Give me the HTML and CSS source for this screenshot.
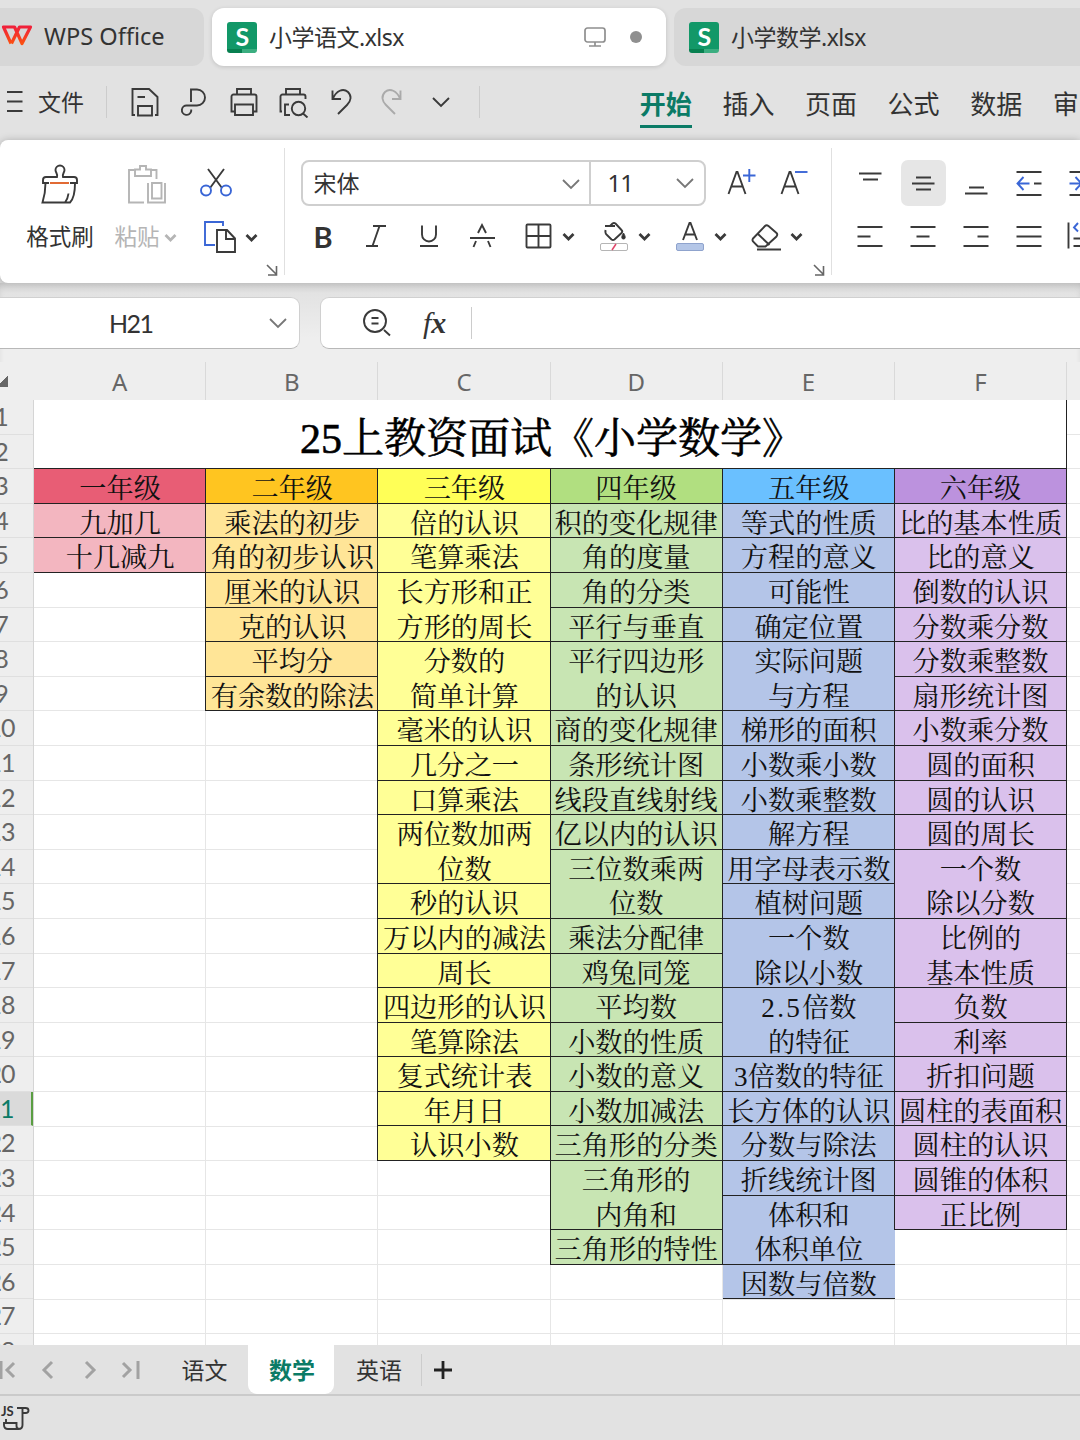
FILE: index.html
```html
<!DOCTYPE html>
<html lang="zh">
<head>
    <meta charset="UTF-8">
    <meta name="viewport" content="width=device-width, initial-scale=1.0">
    <title>WPS Office</title>
    <link rel="stylesheet" href="styles.css">
</head>
<body>
    <!-- 文档标签 -->
    <div class="tabbar">
        <div class="tab tab-home">
            <svg class="logo" width="32" height="26" viewBox="0 0 32 26">
                <defs>
                    <linearGradient id="wps" x1="0" y1="0" x2="0" y2="1">
                        <stop offset="0" stop-color="#f0203a"/>
                        <stop offset="1" stop-color="#fb5012"/>
                    </linearGradient>
                </defs>
                <path d="M10 20.500L2.500 4H13.500L21 20.500L29.500 4H18.500L10.500 20.500" fill="none" stroke="url(#wps)" stroke-width="3.2" stroke-linejoin="round"/>
            </svg>
            <span class="wps-name">WPS Office</span>
        </div>
        <div class="tab tab-active">
            <div class="file-icon">S</div>
            <span>小学语文.xlsx</span>
            <svg class="monitor" width="24" height="24" viewBox="0 0 24 24">
                <rect x="2" y="3" width="20" height="14" rx="2.5"/>
                <path d="M12 17v4M6 21h12"/>
            </svg>
            <span class="dot"></span>
        </div>
        <div class="tab tab-next">
            <div class="file-icon">S</div>
            <span>小学数学.xlsx</span>
        </div>
    </div>

    <!-- 菜单 -->
    <div class="menubar">
        <svg class="burger" width="18" height="24" viewBox="0 0 18 24"><path d="M1 2h15.500M1 11.500h15.500M1 21h15.500"/></svg>
        <span class="file-menu">文件</span>
        <span class="sep"></span>
        <div class="quick">
            <svg viewBox="0 0 32 32"><path d="M6 29H3.500V3H20l8.500 8v18H26M9 29.500V20h14v9.500zM8.500 11H16"/></svg>
            <svg viewBox="0 0 32 32"><path d="M13 16V3.500h6a8 8 0 0 1 0 16H9a4.700 4.700 0 1 0 4.200 5.500v-1.500"/></svg>
            <svg viewBox="0 0 32 32"><path d="M9 8.500V3h14v5.500M7 25.500H3.500v-15a2 2 0 0 1 2-2h21a2 2 0 0 1 2 2v15H25M7 18.500h18v10.500H7z"/></svg>
            <svg viewBox="0 0 32 32"><path d="M9 8.500V3h14v5.500M5 25.500H3.500v-15a2 2 0 0 1 2-2h21a2 2 0 0 1 2 2V13M12 18.500H8v10.500h5M26 27.500l4.500 4"/><circle cx="21.500" cy="22.500" r="6.700"/></svg>
            <svg viewBox="0 0 32 32"><path d="M6.500 4.500v8.500H15M7 12.500C10 5 17 1.500 22 6c4 4 3 9-1 13l-9 9"/></svg>
            <svg class="off" viewBox="0 0 32 32"><path d="M25.500 4.500v8.500H17M25 12.500C22 5 15 1.500 10 6c-4 4-3 9 1 13l9 9"/></svg>
            <svg viewBox="0 0 32 32"><path d="M8 12l8 8 8-8"/></svg>
        </div>
        <span class="sep"></span>
        <div class="menus">
            <span class="on">开始</span>
            <span>插入</span>
            <span>页面</span>
            <span>公式</span>
            <span>数据</span>
            <span>审阅</span>
        </div>
    </div>

    <!-- 功能区 -->
    <div class="ribbon">
        <div class="group clip">
            <div class="big">
                <svg width="40" height="42" viewBox="0 0 40 42">
                    <path d="M17 13c1-3-1.500-4.500-1.500-7a4.500 4.500 0 0 1 9 0c0 2.500-2.500 4-1.500 7H34a3 3 0 0 1 3 3v3H3v-3a3 3 0 0 1 3-3zM5.500 19c0 8-1 13-3 19.500H30c4-4 5-11 5-19.500M25 38.500c2-2.500 3-5 3.500-9"/>
                    <path d="M9 19h21" stroke="#fff" stroke-width="3"/>
                    <path d="M10 19h19" stroke="#e0622a"/>
                </svg>
                <span>格式刷</span>
            </div>
            <div class="big off">
                <svg width="40" height="42" viewBox="0 0 40 42"><path d="M18 38.500H3V6h5M25 6h5.500v9M9 5.500h5V2h6v3.500h5v6.500H9zM22 19v19.500h17V19M26 19h9.500v15.500H26z"/></svg>
                <span>粘贴<svg class="caret" viewBox="0 0 12 12"><path d="M2 4l4 4 4-4"/></svg></span>
            </div>
            <div class="small">
                <svg width="34" height="32" viewBox="0 0 34 32">
                    <path d="M9 2l14 19M25 2L11 21"/>
                    <g stroke="#3a66d6"><circle cx="7" cy="23.500" r="5"/><circle cx="27" cy="23.500" r="5"/></g>
                </svg>
                <span class="pair">
                    <svg width="34" height="34" viewBox="0 0 34 34">
                        <path d="M12 25H2V2h18v4" stroke="#3a66d6"/>
                        <path d="M14 10h10l8 8.500V32H14zM23 10v9h9"/>
                    </svg>
                    <svg class="caret" viewBox="0 0 12 12"><path d="M2 4l4 4 4-4"/></svg>
                </span>
            </div>
            <svg class="corner" viewBox="0 0 12 12"><path d="M1 1l9 9M10.500 2v9H2"/></svg>
        </div>

        <div class="group font">
            <div class="line">
                <div class="combo">
                    <div class="combo-name">宋体<svg width="20" height="12" viewBox="0 0 20 12"><path d="M2 2l8 8 8-8"/></svg></div>
                    <div class="combo-size">11<svg width="20" height="12" viewBox="0 0 20 12"><path d="M2 2l8 8 8-8"/></svg></div>
                </div>
                <svg class="sizer" width="53" height="32" viewBox="0 0 53 32"><path d="M10.500 27l8-22h1l8 22M13.500 19.500h11"/><path d="M25 8.500h12.500M31.300 2v13" stroke="#3a66d6"/></svg>
                <svg class="sizer" width="53" height="32" viewBox="0 0 53 32"><path d="M10.500 27l8-22h1l8 22M13.500 19.500h11"/><path d="M24 5h12.500" stroke="#3a66d6"/></svg>
            </div>
            <div class="line">
                <span class="cell bold">B</span>
                <span class="cell"><svg width="32" height="32" viewBox="0 0 32 32"><path d="M13 5h13M6 25h12M19.500 5l-7 20"/></svg></span>
                <span class="cell"><svg width="32" height="32" viewBox="0 0 32 32"><path d="M9 4.500v9a7 7 0 0 0 14 0v-9M7 25h18"/></svg></span>
                <span class="cell"><svg width="32" height="32" viewBox="0 0 32 32"><path d="M12 12l4-8 4 8M4 17h25M10 20l-2.500 6M22 20l2.500 6"/></svg></span>
                <span class="pair">
                    <svg width="32" height="32" viewBox="0 0 32 32"><rect x="4.500" y="3.500" width="24" height="23" rx="1"/><path d="M16.500 3.500v23M4.500 15h24"/></svg>
                    <svg class="caret" viewBox="0 0 12 12"><path d="M2 4l4 4 4-4"/></svg>
                </span>
                <span class="pair">
                    <svg width="32" height="32" viewBox="0 0 32 32">
                        <path d="M7 5h10M7.500 9c-.5 3 0 4 1.500 5l4.500 4.500q1.500 1 3 0l7-6.500q1.500-1.500 0-3l-6-6.500q-1.500-1-3 0L12 5"/>
                        <path d="M25.500 12c2.500 4 2 6 0 6s-2.500-2 0-6z" fill="#333" stroke-width="1"/>
                        <rect x="2.500" y="22.500" width="27" height="7" rx="1.500" stroke="#b5b5b5" stroke-width="1"/>
                        <path d="M14 29l4-6" stroke="#e0456a" stroke-width="1.500"/>
                    </svg>
                    <svg class="caret" viewBox="0 0 12 12"><path d="M2 4l4 4 4-4"/></svg>
                </span>
                <span class="pair">
                    <svg width="32" height="32" viewBox="0 0 32 32">
                        <path d="M9 19l6.500-17h1L23 19M11.500 13.500h9.500"/>
                        <rect x="2.500" y="22.500" width="27" height="7" rx="1.500" fill="#b4c6e7" stroke="#8fa3cd" stroke-width="1"/>
                    </svg>
                    <svg class="caret" viewBox="0 0 12 12"><path d="M2 4l4 4 4-4"/></svg>
                </span>
                <span class="pair">
                    <svg width="32" height="32" viewBox="0 0 32 32"><path d="M3 17.500L15 5q1.500-1.500 3.500 0l8 7q1.500 1.500 0 3.500L15.500 25.500H8l-5-5q-1-1.500 0-3zM8 13l11.500 11M7 28.500h24"/></svg>
                    <svg class="caret" viewBox="0 0 12 12"><path d="M2 4l4 4 4-4"/></svg>
                </span>
            </div>
            <svg class="corner" viewBox="0 0 12 12"><path d="M1 1l9 9M10.500 2v9H2"/></svg>
        </div>

        <div class="group align">
            <div class="line">
                <span class="cell"><svg width="32" height="32" viewBox="0 0 32 32"><path d="M5 6.500h22.500M9 12.500h15"/></svg></span>
                <span class="cell on"><svg width="32" height="32" viewBox="0 0 32 32"><path d="M9 10.500h15M5 16.500h22.500M9 22.500h15"/></svg></span>
                <span class="cell"><svg width="32" height="32" viewBox="0 0 32 32"><path d="M9 20.500h15M5 26.500h22.500"/></svg></span>
                <span class="cell"><svg width="32" height="32" viewBox="0 0 32 32"><path d="M3.500 5h25M3.500 28h25M21 16.500h7.500"/><path d="M10.500 10l-6 6.500 6 6.500M4.500 16.500h12" stroke="#3a66d6"/></svg></span>
                <span class="cell"><svg width="32" height="32" viewBox="0 0 32 32"><path d="M3.500 5h25M3.500 28h25"/><path d="M9.500 10l6 6.500-6 6.500M3.500 16.500h12" stroke="#3a66d6"/></svg></span>
            </div>
            <div class="line">
                <span class="cell"><svg width="32" height="32" viewBox="0 0 32 32"><path d="M3.500 6h25M3.500 15.500h13M3.500 25h25"/></svg></span>
                <span class="cell"><svg width="32" height="32" viewBox="0 0 32 32"><path d="M3.500 6h25M9.500 15.500h13M3.500 25h25"/></svg></span>
                <span class="cell"><svg width="32" height="32" viewBox="0 0 32 32"><path d="M3.500 6h25M17.500 15.500h11M3.500 25h25"/></svg></span>
                <span class="cell"><svg width="32" height="32" viewBox="0 0 32 32"><path d="M3.500 6h25M3.500 15.500h25M3.500 25h25"/></svg></span>
                <span class="cell"><svg width="32" height="32" viewBox="0 0 32 32"><path d="M2.500 1.500v26M7.500 17.500h20M7.500 25h20"/><path d="M12 2L8 6.500l4 4" stroke="#3a66d6"/></svg></span>
            </div>
        </div>
    </div>

    <!-- 编辑栏 -->
    <div class="formula">
        <div class="name-box"><span>H21</span><svg width="20" height="12" viewBox="0 0 20 12"><path d="M2 2l8 8 8-8"/></svg></div>
        <div class="fx-box">
            <svg width="32" height="32" viewBox="0 0 32 32"><circle cx="15" cy="14" r="11"/><path d="M11.500 11h7M11.500 16.500h7M24 23l6 5.500"/></svg>
            <span class="fx">f<b>x</b></span>
            <span class="sep"></span>
        </div>
    </div>

    <!-- 表格 -->
    <div class="heads">
        <span class="all"></span>
        <span>A</span><span>B</span><span>C</span><span>D</span><span>E</span><span>F</span>
    </div>
    <div class="sheet">
        <div class="nums">
            <span>1</span><span>2</span><span>3</span><span>4</span><span>5</span><span>6</span><span>7</span>
            <span>8</span><span>9</span><span>10</span><span>11</span><span>12</span><span>13</span><span>14</span>
            <span>15</span><span>16</span><span>17</span><span>18</span><span>19</span><span>20</span><span class="on">21</span>
            <span>22</span><span>23</span><span>24</span><span>25</span><span>26</span><span>27</span><span>28</span>
        </div>
        <div class="grid">
            <div class="title">25上教资面试《小学数学》</div>
            <div class="cols">
                <div class="col c1">
                    <div>一年级</div>
                    <div>九加几</div>
                    <div>十几减九</div>
                </div>
                <div class="col c2">
                    <div>二年级</div>
                    <div>乘法的初步</div>
                    <div>角的初步认识</div>
                    <div>厘米的认识</div>
                    <div>克的认识</div>
                    <div>平均分</div>
                    <div>有余数的除法</div>
                </div>
                <div class="col c3">
                    <div>三年级</div>
                    <div>倍的认识</div>
                    <div>笔算乘法</div>
                    <div class="two">长方形和正<br>方形的周长</div>
                    <div class="two">分数的<br>简单计算</div>
                    <div>毫米的认识</div>
                    <div>几分之一</div>
                    <div>口算乘法</div>
                    <div class="two">两位数加两<br>位数</div>
                    <div>秒的认识</div>
                    <div>万以内的减法</div>
                    <div>周长</div>
                    <div>四边形的认识</div>
                    <div>笔算除法</div>
                    <div>复式统计表</div>
                    <div>年月日</div>
                    <div>认识小数</div>
                </div>
                <div class="col c4">
                    <div>四年级</div>
                    <div>积的变化规律</div>
                    <div>角的度量</div>
                    <div>角的分类</div>
                    <div>平行与垂直</div>
                    <div class="two">平行四边形<br>的认识</div>
                    <div>商的变化规律</div>
                    <div>条形统计图</div>
                    <div>线段直线射线</div>
                    <div>亿以内的认识</div>
                    <div class="two">三位数乘两<br>位数</div>
                    <div>乘法分配律</div>
                    <div>鸡兔同笼</div>
                    <div>平均数</div>
                    <div>小数的性质</div>
                    <div>小数的意义</div>
                    <div>小数加减法</div>
                    <div>三角形的分类</div>
                    <div class="two">三角形的<br>内角和</div>
                    <div>三角形的特性</div>
                </div>
                <div class="col c5">
                    <div>五年级</div>
                    <div>等式的性质</div>
                    <div>方程的意义</div>
                    <div>可能性</div>
                    <div>确定位置</div>
                    <div class="two">实际问题<br>与方程</div>
                    <div>梯形的面积</div>
                    <div>小数乘小数</div>
                    <div>小数乘整数</div>
                    <div>解方程</div>
                    <div>用字母表示数</div>
                    <div>植树问题</div>
                    <div class="two">一个数<br>除以小数</div>
                    <div class="two"><span class="dec">2.5</span>倍数<br>的特征</div>
                    <div>3倍数的特征</div>
                    <div>长方体的认识</div>
                    <div>分数与除法</div>
                    <div>折线统计图</div>
                    <div class="two">体积和<br>体积单位</div>
                    <div>因数与倍数</div>
                </div>
                <div class="col c6">
                    <div>六年级</div>
                    <div>比的基本性质</div>
                    <div>比的意义</div>
                    <div>倒数的认识</div>
                    <div>分数乘分数</div>
                    <div>分数乘整数</div>
                    <div>扇形统计图</div>
                    <div>小数乘分数</div>
                    <div>圆的面积</div>
                    <div>圆的认识</div>
                    <div>圆的周长</div>
                    <div class="two">一个数<br>除以分数</div>
                    <div class="two">比例的<br>基本性质</div>
                    <div>负数</div>
                    <div>利率</div>
                    <div>折扣问题</div>
                    <div>圆柱的表面积</div>
                    <div>圆柱的认识</div>
                    <div>圆锥的体积</div>
                    <div>正比例</div>
                </div>
            </div>
        </div>
    </div>

    <!-- 工作表标签 -->
    <div class="sheet-tabs">
        <div class="nav">
            <svg viewBox="0 0 20 20"><path d="M3 1v18M16 3l-7 7 7 7"/></svg>
            <svg viewBox="0 0 20 20"><path d="M13 2l-8 8 8 8"/></svg>
            <svg viewBox="0 0 20 20"><path d="M6 2l8 8-8 8"/></svg>
            <svg viewBox="0 0 20 20"><path d="M2 3l7 7-7 7M17 1v18"/></svg>
        </div>
        <span class="st">语文</span>
        <span class="st on">数学</span>
        <span class="st">英语</span>
        <span class="sep"></span>
        <svg class="plus" width="20" height="20" viewBox="0 0 20 20"><path d="M10 1v18M1 10h18"/></svg>
    </div>
    <div class="status">
        <svg width="30" height="28" viewBox="0 0 30 28">
            <text x="1" y="12">JS</text>
            <path d="M17 4h8.500q3 0 3 2.500t-3 2.500H23M22.500 4v17q0 4-4 4H8q-4 0-4-4v-2h12.500v3q0 3 3 3M6 19v-4"/>
        </svg>
    </div>
</body>
</html>
```
FILE: styles.css
```css
* {
    box-sizing: border-box;
}

body {
    margin: 0;
    width: 1080px;
    height: 1440px;
    overflow: hidden;
    display: flex;
    flex-direction: column;
    background: #e2e2e2;
    color: #333;
    font-family: "Noto Sans", "Noto Sans CJK SC", sans-serif;
    font-size: 23px;
    line-height: 1;
    white-space: nowrap;
}

svg {
    display: block;
    flex: none;
    fill: none;
    stroke: #3a3a3a;
    stroke-width: 1.9;
}

.sep {
    width: 1px;
    height: 32px;
    background: #cccccc;
    flex: none;
}

/* 文档标签 */
.tabbar {
    height: 75px;
    flex: none;
    padding-top: 8px;
    display: flex;
    gap: 8px;
}

.tab {
    height: 58px;
    border-radius: 12px;
    background: #d7d7d7;
    display: flex;
    align-items: center;
    flex: none;
    padding-left: 15px;
    letter-spacing: -0.5px;
}

.tab-home {
    width: 204px;
    padding-left: 1px;
    border-radius: 0 12px 12px 0;
    gap: 11px;
    letter-spacing: 0;
    font-size: 23.6px;
}

.logo {
    margin-top: -3px;
}

.tab-active {
    width: 454px;
    background: #fff;
    box-shadow: 0 1px 4px rgba(0, 0, 0, 0.15);
}

.tab-next {
    width: 420px;
    border-radius: 12px 0 0 12px;
}

.file-icon {
    width: 30px;
    height: 31px;
    margin-right: 12px;
    border-radius: 3px;
    background: linear-gradient(90deg, #078050 50%, #3bae80 50%) bottom / 100% 4px no-repeat #129868;
    color: #fff;
    font: bold 25px/28px Lato, sans-serif;
    text-align: center;
}

.monitor {
    margin-left: auto;
    margin-right: 23px;
    stroke: #8f8f8f;
    stroke-width: 1.7;
}

.dot {
    width: 12px;
    height: 12px;
    border-radius: 50%;
    background: #8f8f8f;
    margin-right: 24px;
}

/* 菜单 */
.menubar {
    height: 65px;
    flex: none;
    display: flex;
    align-items: center;
    padding: 0 0 11px 6px;
}

.file-menu {
    margin: 0 22px 0 14px;
}

.quick {
    display: flex;
    margin: 0 22px;
}

.quick svg {
    width: 32px;
    height: 32px;
    margin-right: 17.3px;
}

.quick svg:last-child {
    margin-right: 0;
}

.quick .off {
    stroke: #aaa;
}

.menus {
    display: flex;
    gap: 30.6px;
    margin-left: 160px;
    font-size: 26px;
}

.menus span {
    padding: 14px 0 8px;
    border-bottom: 3px solid transparent;
}

.menus .on {
    color: #0b7b66;
    font-weight: bold;
    border-color: #0b7b66;
}

/* 功能区 */
.ribbon {
    height: 143px;
    flex: none;
    display: flex;
    padding-top: 8px;
    background: #fff;
    border-radius: 8px 0 0 8px;
    box-shadow: 0 1px 9px rgba(0, 0, 0, 0.28);
}

.group {
    position: relative;
    height: 127px;
    border-right: 1px solid #e0e0e0;
    flex: none;
}

.corner {
    position: absolute;
    right: 6px;
    bottom: -1px;
    width: 12px;
    height: 12px;
    stroke: #666;
    stroke-width: 1.6;
}

.caret {
    width: 15px;
    height: 15px;
    stroke-width: 2.2;
}

.clip {
    width: 285px;
    display: flex;
}

.big {
    width: 86px;
    padding-top: 16px;
    display: flex;
    flex-direction: column;
    align-items: center;
    gap: 20px;
    font-size: 22.5px;
}

.big:first-child {
    margin-left: 17px;
}

.big span {
    display: flex;
    align-items: center;
    gap: 3px;
}

.big.off {
    color: #b5b5b5;
}

.big.off svg {
    stroke: #b5b5b5;
}

.small {
    padding: 19px 0 0 10px;
    display: flex;
    flex-direction: column;
    gap: 21px;
}

.small .pair {
    width: 60px;
    margin-left: 4px;
}

.pair {
    width: 76px;
    display: flex;
    align-items: center;
    gap: 7px;
    flex: none;
}

.line {
    display: flex;
    align-items: center;
    height: 53px;
}

.line + .line {
    margin-top: 1px;
}

.cell {
    width: 53px;
    height: 46px;
    display: flex;
    align-items: center;
    justify-content: center;
    flex: none;
}

.font {
    width: 547px;
    padding-top: 8px;
    padding-left: 11.5px;
}

.font .line .pair:nth-child(5) {
    margin-left: 13px;
}

.bold {
    font: bold 29px/1 Lato, sans-serif;
}

.combo {
    width: 405px;
    height: 46px;
    margin-left: 4px;
    margin-right: 12px;
    border: 2px solid #cfcfcf;
    border-radius: 8px;
    display: flex;
}

.combo div {
    display: flex;
    align-items: center;
    justify-content: space-between;
}

.combo svg,
.name-box svg {
    stroke: #777;
    stroke-width: 1.8;
}

.combo-name {
    width: 288px;
    padding: 2px 8px 0 11px;
    border-right: 2px solid #cfcfcf;
}

.combo-size {
    flex: 1;
    padding: 0 9px 0 17px;
    font-size: 24px;
    letter-spacing: -1px;
}

.align {
    width: 280px;
    padding: 8px 0 0 11.5px;
    border: 0;
}

.align .on {
    width: 45px;
    margin: 0 4px;
    background: #e6e6e6;
    border-radius: 7px;
}

/* 编辑栏 */
.formula {
    height: 79px;
    flex: none;
    padding-top: 14px;
    display: flex;
    gap: 20px;
    background: linear-gradient(#e0e0e0, #eee 70%);
    box-shadow: inset 0 6px 8px -4px rgba(0, 0, 0, 0.2);
}

.name-box,
.fx-box {
    height: 52px;
    background: #fff;
    display: flex;
    align-items: center;
    border: 1px solid #d0d0d0;
    border-bottom-color: #b8b8b8;
}

.name-box {
    width: 300px;
    border-left: 0;
    border-radius: 0 9px 9px 0;
    padding-left: 109px;
    font-family: Lato, sans-serif;
    font-size: 25px;
    letter-spacing: -1.5px;
}

.name-box svg {
    margin-left: auto;
    margin-right: 11px;
}

.fx-box {
    flex: 1;
    border-right: 0;
    border-radius: 9px 0 0 9px;
    padding-left: 39px;
}

.fx {
    margin: 0 25px 0 31px;
    font: italic 30px/1 "Liberation Serif", serif;
}

/* 表格 */
.heads {
    height: 39px;
    flex: none;
    display: flex;
    background: #eee;
    font-size: 24px;
    color: #666;
    border-bottom: 1px solid #ddd;
}

.heads span {
    width: 172.2px;
    flex: none;
    text-align: center;
    line-height: 39px;
    border-right: 1px solid #d9d9d9;
}

.heads .all {
    width: 34px;
    height: 25px;
    border: 0;
    background: linear-gradient(135deg, transparent 50%, #666 50%) -3px 14px / 11px 11px no-repeat;
}

.sheet {
    height: 945px;
    flex: none;
    display: flex;
    overflow: hidden;
    margin-top: -1px;
}

.nums {
    width: 65px;
    margin-left: -31px;
    flex: none;
    background: #eee;
    border-right: 1px solid #d5d5d5;
    font-family: Lato, sans-serif;
    font-size: 25px;
    letter-spacing: -1px;
    color: #666;
    text-align: center;
}

.nums span {
    display: block;
    height: 34.6px;
    line-height: 33px;
    border-bottom: 1px solid #dfdfdf;
}

.nums .on {
    background: #dadada;
    color: #0b7b66;
    border-right: 2px solid #5a9e42;
}

.grid {
    flex: 1;
    background:
        repeating-linear-gradient(90deg, transparent 0 171.2px, #e6e6e6 171.2px 172.2px),
        repeating-linear-gradient(transparent 0 33.6px, #e6e6e6 33.6px 34.6px),
        #fff;
    color: #111;
    font-family: SimSun, "Liberation Serif", "Noto Serif CJK SC", "Noto Sans CJK SC", serif;
    font-size: 27.2px;
    text-align: center;
}

.title {
    width: 1033.2px;
    height: 69.2px;
    padding: 5px 0 0 4px;
    background: #fff;
    border-right: 1px solid #222;
    border-bottom: 1px solid #222;
    color: #000;
    font-size: 42px;
    line-height: 69px;
    -webkit-text-stroke: 0.6px #000;
}

.cols {
    display: flex;
    align-items: flex-start;
}

.col {
    width: 172.2px;
    flex: none;
}

.col div {
    height: 34.6px;
    line-height: 34.6px;
    padding-top: 3px;
    border-bottom: 1px solid #222;
}

.col .two {
    height: 69.2px;
}

.dec {
    letter-spacing: 2.2px;
}

.c1 div { background: #f3b6c0; }
.c2 div { background: #ffe597; }
.c3 div { background: #ffff96; }
.c4 div { background: #c8e5b3; }
.c5 div { background: #b4c5e8; }
.c6 div { background: #dac1ec; }

.c1 div:first-child { background: #e85d75; }
.c2 div:first-child { background: #ffc520; }
.c3 div:first-child { background: #ffff57; }
.c4 div:first-child { background: #b1df80; }
.c5 div:first-child { background: #6ac0ff; }
.c6 div:first-child { background: #bc92de; }

.c2 div,
.c3 div,
.c4 div,
.c6 div {
    margin-left: -1px;
    border-left: 1px solid #222;
}

.c4 div,
.c6 div {
    border-right: 1px solid #222;
}

/* 工作表标签 */
.sheet-tabs {
    height: 51px;
    flex: none;
    display: flex;
    align-items: center;
    border-bottom: 2px solid #cacaca;
}

.nav {
    display: flex;
    gap: 21px;
    margin-left: -2px;
    width: 161px;
}

.nav svg {
    width: 20px;
    height: 20px;
    stroke: #a2a2a2;
    stroke-width: 3;
}

.st {
    height: 49px;
    width: 86px;
    line-height: 50px;
    text-align: center;
}

.st:nth-child(2) {
    width: 89px;
    padding-left: 2px;
}

.st.on {
    align-self: flex-start;
    padding-left: 2px;
    background: #fff;
    color: #0b7b66;
    font-weight: bold;
    border-radius: 0 0 9px 9px;
}

.sheet-tabs .sep {
    margin: 0 11px 0 -3px;
}

.st:nth-child(4) {
    width: 90px;
}

.plus {
    stroke: #222;
    stroke-width: 2.8;
}

.status {
    height: 44px;
    padding-top: 8px;
}

.status text {
    font: bold 13px Lato, sans-serif;
    fill: #333;
    stroke: none;
}
```
